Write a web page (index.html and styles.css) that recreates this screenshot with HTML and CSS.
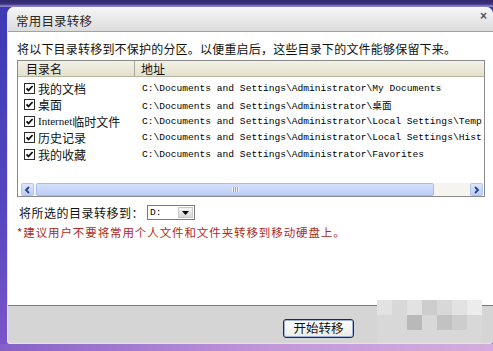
FILE: index.html
```html
<!DOCTYPE html>
<html lang="zh-CN">
<head>
    <meta charset="UTF-8">
    <title>常用目录转移</title>
    <link rel="stylesheet" href="styles.css">
</head>
<body>
    <div class="window">
        <div class="titlebar">
            <span class="title">常用目录转移</span>
            <span class="close">×</span>
        </div>

        <div class="content">
            <p class="intro">将以下目录转移到不保护的分区。以便重启后，这些目录下的文件能够保留下来。</p>

            <div class="listbox">
                <div class="list-head">
                    <div class="col-name">目录名</div>
                    <div class="col-path">地址</div>
                </div>
                <div class="list-rows">
                    <div class="row">
                        <div class="col-name"><span class="check"><svg width="11" height="11" viewBox="0 0 11 11"><rect x="0.5" y="0.5" width="10" height="10" fill="#fff" stroke="#2b2b2b"/><path d="M2.5 5.3 L4.5 7.4 L8.6 3" fill="none" stroke="#111" stroke-width="1.8"/></svg></span>我的文档</div>
                        <div class="col-path">C:\Documents and Settings\Administrator\My Documents</div>
                    </div>
                    <div class="row">
                        <div class="col-name"><span class="check"><svg width="11" height="11" viewBox="0 0 11 11"><rect x="0.5" y="0.5" width="10" height="10" fill="#fff" stroke="#2b2b2b"/><path d="M2.5 5.3 L4.5 7.4 L8.6 3" fill="none" stroke="#111" stroke-width="1.8"/></svg></span>桌面</div>
                        <div class="col-path">C:\Documents and Settings\Administrator\桌面</div>
                    </div>
                    <div class="row">
                        <div class="col-name"><span class="check"><svg width="11" height="11" viewBox="0 0 11 11"><rect x="0.5" y="0.5" width="10" height="10" fill="#fff" stroke="#2b2b2b"/><path d="M2.5 5.3 L4.5 7.4 L8.6 3" fill="none" stroke="#111" stroke-width="1.8"/></svg></span><span class="latin">Internet</span>临时文件</div>
                        <div class="col-path">C:\Documents and Settings\Administrator\Local Settings\Temp</div>
                    </div>
                    <div class="row">
                        <div class="col-name"><span class="check"><svg width="11" height="11" viewBox="0 0 11 11"><rect x="0.5" y="0.5" width="10" height="10" fill="#fff" stroke="#2b2b2b"/><path d="M2.5 5.3 L4.5 7.4 L8.6 3" fill="none" stroke="#111" stroke-width="1.8"/></svg></span>历史记录</div>
                        <div class="col-path">C:\Documents and Settings\Administrator\Local Settings\Hist</div>
                    </div>
                    <div class="row">
                        <div class="col-name"><span class="check"><svg width="11" height="11" viewBox="0 0 11 11"><rect x="0.5" y="0.5" width="10" height="10" fill="#fff" stroke="#2b2b2b"/><path d="M2.5 5.3 L4.5 7.4 L8.6 3" fill="none" stroke="#111" stroke-width="1.8"/></svg></span>我的收藏</div>
                        <div class="col-path">C:\Documents and Settings\Administrator\Favorites</div>
                    </div>
                </div>
                <div class="hscroll">
                    <span class="arrow"><svg width="7" height="8" viewBox="0 0 7 8"><path d="M5 1 L2 4 L5 7" fill="none" stroke="#2a3f8c" stroke-width="1.8"/></svg></span>
                    <span class="track">
                        <span class="thumb"><span class="grip"></span></span>
                    </span>
                    <span class="arrow"><svg width="7" height="8" viewBox="0 0 7 8"><path d="M2 1 L5 4 L2 7" fill="none" stroke="#2a3f8c" stroke-width="1.8"/></svg></span>
                </div>
            </div>

            <div class="move-row">
                <span class="move-label">将所选的目录转移到：</span>
                <span class="drive-select">
                    <span class="drive">D:</span>
                    <span class="drop"><svg width="7" height="4" viewBox="0 0 7 4"><path d="M0 0 H7 L3.5 4 Z" fill="#000"/></svg></span>
                </span>
            </div>

            <p class="note">*建议用户不要将常用个人文件和文件夹转移到移动硬盘上。</p>
        </div>

        <div class="footer">
            <button class="start-button">开始转移</button>
        </div>

        <!-- 水印马赛克 -->
        <div class="mosaic">
            <span class="m1"></span><span class="m2"></span><span class="m1"></span><span class="m3"></span><span class="m2"></span><span class="m1"></span><span class="m0"></span>
            <span class="m2"></span><span class="m2"></span><span class="m4"></span><span class="m2"></span><span class="m5"></span><span class="m3"></span><span class="m2"></span>
            <span class="m2"></span><span class="m2"></span><span class="m2"></span><span class="m2"></span><span class="m2"></span><span class="m2"></span><span class="m2"></span>
        </div>
    </div>
</body>
</html>
```

FILE: styles.css
```css
body {
    margin: 0;
    width: 493px;
    height: 351px;
    overflow: hidden;
    font-family: "Noto Sans CJK SC", "Liberation Sans", sans-serif;
    background:
        linear-gradient(to bottom, #30286e 0, #3b3180 4px, #8a82c6 6px, #8a82c6 7px) top / 100% 7px no-repeat,
        linear-gradient(to right, #8560c8, #c496da 55%, #d6acde) bottom / 100% 7px no-repeat,
        linear-gradient(to bottom, #3a3ab4, #5646c0 60%, #7c56c8);
}

.window {
    position: relative;
    box-sizing: border-box;
    margin: 7px 0 0 7px;
    width: 486px;
    height: 337px;
    border-left: 1px solid #e4e0f2;
    border-bottom: 1px solid #e4e0f2;
    border-radius: 7px 7px 3px 3px;
    overflow: hidden;
    background: #fff;
    display: flex;
    flex-direction: column;
}

.titlebar {
    height: 24px;
    border-bottom: 1px solid #a2a2a2;
    background: linear-gradient(to bottom, #f6f6f6, #dcdcdc);
    display: flex;
    justify-content: space-between;
    padding: 0 6px 0 8px;
}

.title {
    font-size: 12.5px;
    line-height: 27px;
    color: #2a2a2a;
    letter-spacing: 0.2px;
}

.close {
    font-family: "Liberation Sans", sans-serif;
    font-size: 12px;
    font-weight: bold;
    color: #555;
    line-height: 18px;
}

.content {
    height: 273px;
    box-sizing: border-box;
    padding: 9px 0 0 9px;
}

.intro {
    margin: 0 0 3px;
    font-size: 12px;
    line-height: 16px;
    letter-spacing: 0.2px;
    color: #111;
}

/* 列表 */
.listbox {
    box-sizing: border-box;
    width: 468px;
    height: 137px;
    border: 1px solid #8a8a8a;
    display: flex;
    flex-direction: column;
    overflow: hidden;
}

.list-head {
    height: 15px;
    flex: none;
    background: linear-gradient(to bottom, #f3f1e6, #e4e0cc);
    border-bottom: 1px solid #b9b49c;
    display: flex;
    font-size: 12px;
    line-height: 15px;
    color: #111;
}

.list-head .col-name {
    width: 117px;
    box-sizing: border-box;
    padding-left: 8px;
    border-right: 1px solid #aca899;
}

.list-head .col-path {
    padding-left: 6px;
}

.list-rows {
    flex: 1;
    padding-top: 3px;
}

.row {
    height: 16.5px;
    display: flex;
    align-items: center;
    white-space: nowrap;
}

.row .col-name {
    width: 117px;
    flex: none;
    box-sizing: border-box;
    padding-left: 6px;
    display: flex;
    align-items: center;
    font-size: 12px;
    color: #111;
}

.check {
    display: inline-flex;
    margin-right: 3px;
}

.latin {
    font-family: "Liberation Serif", serif;
    font-size: 11px;
}

.row .col-path {
    padding-left: 7px;
    font-family: "Liberation Mono", "Noto Sans CJK SC", monospace;
    font-size: 9.6px;
    color: #000;
}

/* 横向滚动条 */
.hscroll {
    height: 13px;
    margin: 0 1px 0 3px;
    display: flex;
    background: #f5f4ee;
}

.arrow {
    width: 13px;
    flex: none;
    box-sizing: border-box;
    border: 1px solid #b4c6f0;
    border-radius: 2px;
    background: linear-gradient(to bottom, #dce6fc, #bccdf5);
    display: flex;
    align-items: center;
    justify-content: center;
}

.track {
    flex: 1;
    padding: 0 36px 0 2px;
    display: flex;
}

.thumb {
    flex: 1;
    box-sizing: border-box;
    border: 1px solid #a7bbec;
    border-radius: 2px;
    background: linear-gradient(to bottom, #d4e0fd, #bccdf6);
    display: flex;
    align-items: center;
    justify-content: center;
}

.grip {
    width: 7px;
    height: 5px;
    background: repeating-linear-gradient(to right, #eef3ff 0, #eef3ff 1px, #8ea6de 1px, #8ea6de 2px);
}

/* 目标驱动器 */
.move-row {
    margin-top: 8px;
    height: 15px;
    display: flex;
    align-items: center;
}

.move-label {
    font-size: 12px;
    letter-spacing: 0.5px;
    padding-left: 2px;
    color: #111;
}

.drive-select {
    margin-left: 3px;
    width: 48px;
    height: 15px;
    box-sizing: border-box;
    border: 1px solid #7a7a7a;
    display: flex;
    justify-content: space-between;
    background: #fff;
}

.drive {
    font-family: "Liberation Mono", monospace;
    font-size: 9.6px;
    line-height: 13px;
    padding-left: 2px;
}

.drop {
    width: 15px;
    margin: 1px;
    box-sizing: border-box;
    border: 1px solid #c8c8c8;
    background: linear-gradient(to bottom, #f4f4f4, #d8d8d8);
    display: flex;
    align-items: center;
    justify-content: center;
}

.note {
    margin: 5px 0 0;
    font-size: 11.5px;
    line-height: 14px;
    letter-spacing: 0.9px;
    color: #b12a22;
}

/* 底部按钮栏 */
.footer {
    flex: 1;
    border-top: 1px solid #7c7c7c;
    background: #d5d5d5;
    padding: 8px 0 0 275px;
}

.start-button {
    width: 71px;
    height: 19px;
    padding: 0;
    border: 1px solid #2a2a2a;
    border-radius: 3px;
    background: linear-gradient(to bottom, #ffffff, #ecebe6);
    box-shadow: inset 0 0 0 1px #9fb2dc;
    font-family: "Noto Sans CJK SC", sans-serif;
    font-size: 12.5px;
    line-height: 16px;
    color: #111;
}

.mosaic {
    position: absolute;
    left: 369px;
    top: 293px;
    display: grid;
    grid-template-columns: repeat(7, 15px);
    grid-auto-rows: 15px;
}

.m0 { background: #ececec; }
.m1 { background: #e2e2e2; }
.m2 { background: #d8d8d8; }
.m3 { background: #cdcdcd; }
.m4 { background: #b9b9b9; }
.m5 { background: #c2c2c2; }
```
